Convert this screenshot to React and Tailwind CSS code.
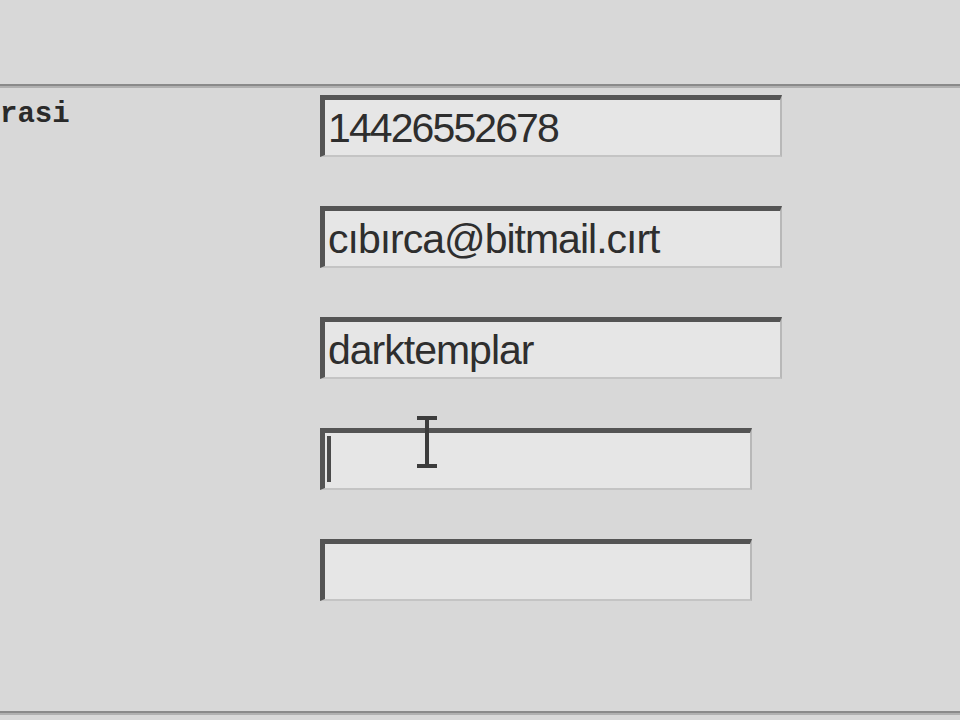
const fields = [
    { value: "14426552678", wide: true, tight: true },
    { value: "cıbırca@bitmail.cırt", wide: true },
    { value: "darktemplar", wide: true },
    { value: "", wide: false, focused: true },
    { value: "", wide: false },
];

const Field = ({ value, wide, focused, tight }) => (
    <div className={`relative flex h-[62px] items-center border-t-[5px] border-l-[5px] border-r-2 border-b-2 border-t-[#545454] border-l-[#545454] border-r-[#b8b8b8] border-b-[#c4c4c4] bg-[#e6e6e6] pl-[3px] ${wide ? "w-[462px]" : "w-[432px]"}`}>
        <span className={`pt-[2px] text-[41px] leading-none text-[#2e2e2e] [font-family:'Liberation_Sans',Arial,sans-serif] ${tight ? "tracking-[-1.9px]" : "tracking-[-1px]"}`}>{value}</span>
        {focused && (
            <>
                <div className="absolute left-[2px] top-[3px] h-[46px] w-[4px] bg-[#4a4a4a]" />
                <svg className="absolute left-[90px] top-[-17px]" width="24" height="52" viewBox="0 0 24 52">
                    <path d="M2 2h20M12 2v48M2 50h20" stroke="#3c3c3c" strokeWidth="4" fill="none" />
                </svg>
            </>
        )}
    </div>
);

export default function App() {
    return (
        <div className="flex h-[720px] w-[960px] flex-col overflow-hidden bg-[#d8d8d8]">
            <div className="h-[84px]" />
            <div className="h-[4px] border-t-2 border-b-2 border-t-[#8a8a8a] border-b-[#b0b0b0]" />
            <div className="flex flex-1">
                <div className="w-[320px] pt-[12px]">
                    <span className="text-[29px] font-bold leading-none text-[#2a2a2a] [font-family:'Liberation_Mono','Courier_New',monospace]">rasi</span>
                </div>
                <div className="flex flex-col gap-[49px] pt-[7px]">
                    {fields.map((f, i) => <Field key={i} {...f} />)}
                </div>
            </div>
            <div className="mb-[5px] h-[4px] border-t-2 border-b-2 border-t-[#8a8a8a] border-b-[#b0b0b0]" />
        </div>
    );
}
